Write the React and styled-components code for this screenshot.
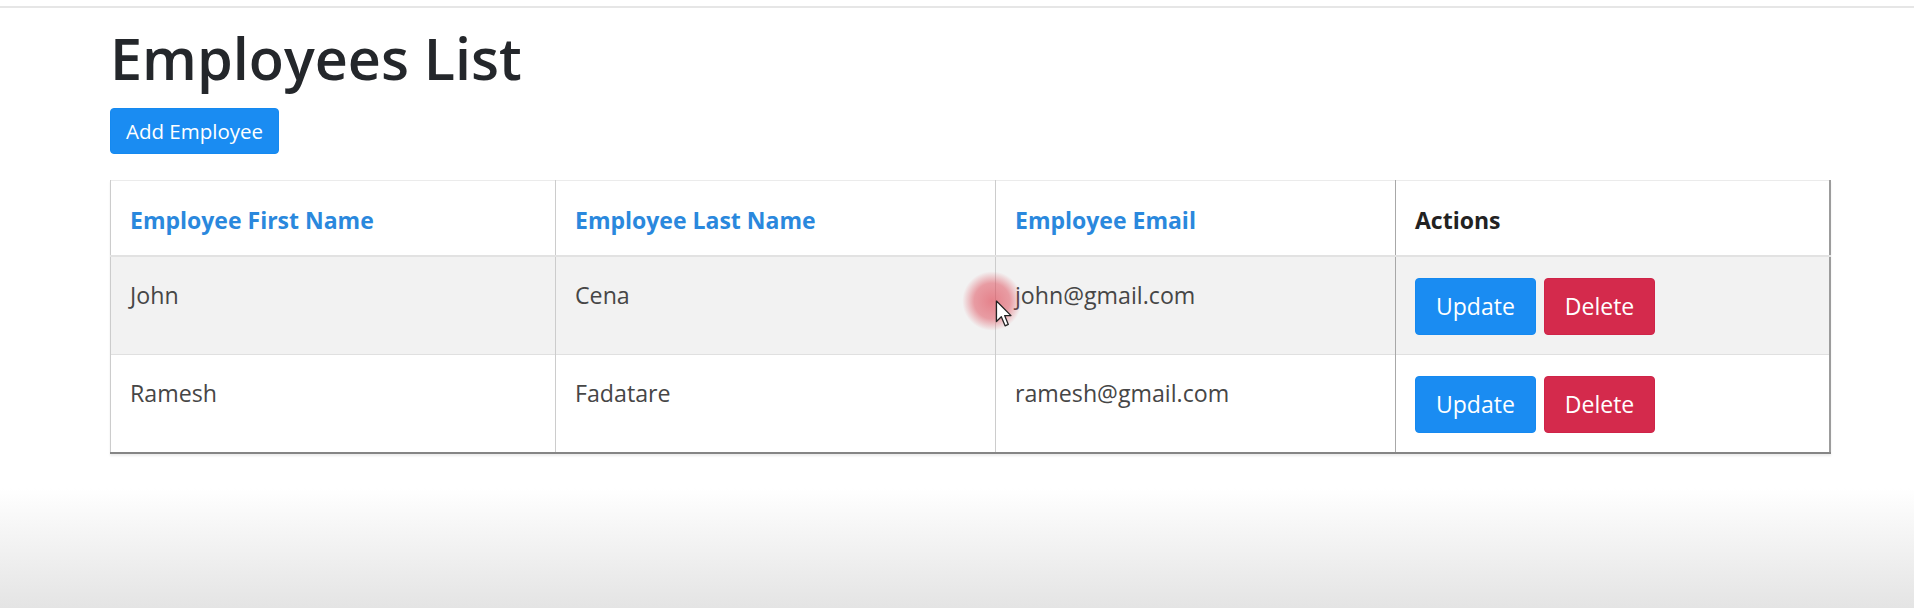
import styled, { createGlobalStyle } from 'styled-components';

const GlobalStyle = createGlobalStyle`
  html, body {
    margin: 0;
    padding: 0;
  }
  body {
    min-height: 608px;
    font-family: "Open Sans", "Noto Sans", sans-serif;
    color: #212529;
    background: linear-gradient(to bottom, #ffffff 0, #ffffff 488px, #e4e4e4 608px);
    background-repeat: no-repeat;
  }
`;

const TopRule = styled.div`
  height: 2px;
  margin-top: 6px;
  background: #e6e6e6;
`;

const Page = styled.div`
  position: relative;
  padding: 17px 0 0 110px;
  width: 1719px;
`;

const Title = styled.h1`
  margin: 0;
  font-size: 57.5px;
  line-height: 67px;
  font-weight: 600;
  color: #24272b;
`;

const Button = styled.button`
  font-family: inherit;
  color: #fff;
  border: 1px solid ${({ $variant }) => ($variant === 'danger' ? '#cf2448' : '#1589f0')};
  background: ${({ $variant }) => ($variant === 'danger' ? '#d42a4c' : '#1a8cf2')};
  border-radius: 4px;
  cursor: pointer;
  font-size: ${({ $size }) => ($size === 'lg' ? '23px' : '20.5px')};
  line-height: ${({ $size }) => ($size === 'lg' ? '39px' : '30px')};
  padding: ${({ $size }) => ($size === 'lg' ? '8px 20px' : '7px 15px')};
`;

const AddButton = styled(Button)`
  display: block;
  margin-top: 16px;
`;

const Table = styled.table`
  margin-top: 26px;
  width: 1719px;
  border-collapse: collapse;
  table-layout: fixed;
  border-top: 1px solid #ebebeb;
  border-left: 1px solid #666;
  border-right: 2px solid #9c9c9c;
  border-bottom: 2px solid #858585;
  box-shadow: 0 2px 2px rgba(0, 0, 0, 0.08);
  font-size: 23.2px;
  line-height: 30px;
`;

const HeadCell = styled.th`
  text-align: left;
  vertical-align: top;
  padding: 24px 19px 20px;
  font-size: 23px;
  font-weight: 700;
  color: ${({ $plain }) => ($plain ? '#222' : '#2a88dd')};
  border-bottom: 2px solid #e2e2e2;
  border-left: 1px solid ${({ $dark }) => ($dark ? '#a8a8a8' : '#cccccc')};
`;

const Row = styled.tr`
  background: ${({ $striped }) => ($striped ? '#f2f2f2' : '#ffffff')};
  border-top: 1px solid #e0e0e0;
`;

const Cell = styled.td`
  vertical-align: top;
  padding: 23px 19px 0;
  color: #464646;
  border-left: 1px solid ${({ $dark }) => ($dark ? '#a8a8a8' : '#cccccc')};
`;

const ActionCell = styled(Cell)`
  padding: 21px 19px 19px;
`;

const Actions = styled.div`
  display: flex;
  gap: 8px;
`;

const CursorMark = styled.div`
  position: absolute;
  left: 962px;
  top: 263px;
  width: 60px;
  height: 60px;
  border-radius: 50%;
  background: radial-gradient(circle, rgba(222, 70, 84, 0.65) 0, rgba(222, 70, 84, 0.5) 42%, rgba(222, 70, 84, 0) 70%);
  pointer-events: none;
`;

const Pointer = styled.svg`
  position: absolute;
  left: 995px;
  top: 292px;
  pointer-events: none;
`;

const employees = [
  { id: 1, firstName: 'John', lastName: 'Cena', email: 'john@gmail.com' },
  { id: 2, firstName: 'Ramesh', lastName: 'Fadatare', email: 'ramesh@gmail.com' },
];

export default function App() {
  return (
    <>
      <GlobalStyle />
      <TopRule />
      <Page>
        <Title>Employees List</Title>
        <AddButton>Add Employee</AddButton>
        <Table>
          <colgroup>
            <col style={{ width: 445 }} />
            <col style={{ width: 440 }} />
            <col style={{ width: 400 }} />
            <col style={{ width: 434 }} />
          </colgroup>
          <thead>
            <tr>
              <HeadCell>Employee First Name</HeadCell>
              <HeadCell>Employee Last Name</HeadCell>
              <HeadCell>Employee Email</HeadCell>
              <HeadCell $plain $dark>Actions</HeadCell>
            </tr>
          </thead>
          <tbody>
            {employees.map((emp, i) => (
              <Row key={emp.id} $striped={i % 2 === 0}>
                <Cell>{emp.firstName}</Cell>
                <Cell>{emp.lastName}</Cell>
                <Cell>{emp.email}</Cell>
                <ActionCell $dark>
                  <Actions>
                    <Button $size="lg">Update</Button>
                    <Button $size="lg" $variant="danger">Delete</Button>
                  </Actions>
                </ActionCell>
              </Row>
            ))}
          </tbody>
        </Table>
        <CursorMark />
        <Pointer width="18" height="28" viewBox="0 0 16 26">
          <path d="M1 1 L1 20 L5.5 15.5 L9 24 L12 22.7 L8.6 14.5 L14.5 14.5 Z" fill="#fff" stroke="#222" strokeWidth="1.2" strokeLinejoin="round" />
        </Pointer>
      </Page>
    </>
  );
}
